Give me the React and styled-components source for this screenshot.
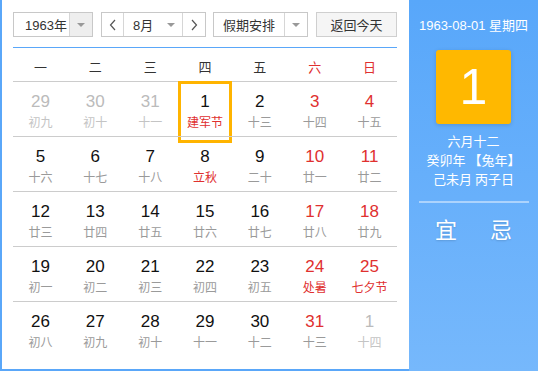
import React from "react";
import styled, { createGlobalStyle, css } from "styled-components";

const Global = createGlobalStyle`
  html, body { margin: 0; padding: 0; background: #fff; }
  body { font-family: "Liberation Sans", "Noto Sans CJK SC", Arial, sans-serif; }
  * { box-sizing: border-box; }
`;

const Frame = styled.div`
  width: 538px;
  height: 371px;
  display: flex;
  background: #5aa7f9;
  overflow: hidden;
`;

const Left = styled.div`
  width: 407px;
  height: 369px;
  margin-left: 2px;
  background: #fff;
  padding: 12px 12px 0 11px;
  display: flex;
  flex-direction: column;
`;

const Toolbar = styled.div`
  display: flex;
  align-items: center;
  height: 25px;
`;

const Box = styled.div`
  display: flex;
  height: 25px;
  border: 1px solid #c8c8c8;
  background: #fff;
  margin-right: ${(p) => p.$mr || 0}px;
`;

const Label = styled.div`
  width: ${(p) => p.$w}px;
  display: flex;
  align-items: center;
  justify-content: ${(p) => (p.$center ? "center" : "flex-start")};
  padding-left: ${(p) => p.$pl || 0}px;
  font-size: 13px;
  color: #333;
  font-family: ${(p) => (p.$cjk ? '"Noto Sans CJK SC", sans-serif' : '"Liberation Sans", "Noto Sans CJK SC", sans-serif')};
`;

const Arrow = styled.div`
  width: ${(p) => p.$w || 23}px;
  display: flex;
  align-items: center;
  justify-content: center;
  background: ${(p) => (p.$bg ? "#eeeeee" : "#fff")};
  border-left: ${(p) => (p.$sep ? "1px solid #d6d6d6" : "none")};
  border-right: ${(p) => (p.$sepR ? "1px solid #d6d6d6" : "none")};
`;

const Tri = styled.span`
  width: 0;
  height: 0;
  border-left: 4px solid transparent;
  border-right: 4px solid transparent;
  border-top: 4px solid #999;
`;

const Button = styled.div`
  margin-left: auto;
  width: 81px;
  height: 25px;
  border: 1px solid #cfcfcf;
  background: #f5f5f5;
  display: flex;
  align-items: center;
  justify-content: center;
  font-size: 13px;
  color: #333;
  font-family: "Noto Sans CJK SC", sans-serif;
`;

const Grid = styled.div`
  margin-top: 10px;
  border-top: 1px solid #5aa7f9;
  display: grid;
  grid-template-columns: repeat(7, 1fr);
`;

const Head = styled.div`
  height: 33px;
  display: flex;
  align-items: center;
  justify-content: center;
  padding-top: 3px;
  font-size: 13px;
  font-family: "Noto Sans CJK SC", sans-serif;
  color: ${(p) => (p.$red ? "#e0302f" : "#333")};
`;

const Cell = styled.div`
  position: relative;
  height: 55px;
  border-top: 1px solid #cccccc;
  display: flex;
  flex-direction: column;
  align-items: center;
  padding-top: 10px;
  ${(p) =>
    p.$today &&
    css`
      &::after {
        content: "";
        position: absolute;
        top: -1px;
        left: 0;
        right: 0;
        height: 56px;
        border: 3px solid #ffb400;
      }
    `}
`;

const Num = styled.div`
  font-size: 17px;
  line-height: 20px;
  font-family: "Liberation Sans", Arial, sans-serif;
  color: ${(p) => (p.$dim ? "#bbbbbb" : p.$red ? "#e0302f" : "#111")};
`;

const Lunar = styled.div`
  margin-top: 2px;
  font-size: 12px;
  line-height: 16px;
  font-family: "Noto Sans CJK SC", sans-serif;
  color: ${(p) => (p.$fest ? "#e0302f" : p.$dim ? "#c4c4c4" : "#9a9a9a")};
`;

const Right = styled.div`
  flex: 1;
  background: linear-gradient(#58a7fa, #76b8fc);
  display: flex;
  flex-direction: column;
  align-items: center;
  color: #fff;
  font-family: "Liberation Sans", "Noto Sans CJK SC", sans-serif;
  padding-top: 17px;
`;

const DateLine = styled.div`
  font-size: 13px;
  line-height: 18px;
`;

const BigDay = styled.div`
  margin-top: 15px;
  width: 75px;
  height: 74px;
  border-radius: 3px;
  background: #ffb800;
  box-shadow: 0 1px 4px rgba(0, 0, 0, 0.15);
  display: flex;
  align-items: center;
  justify-content: center;
  font-size: 50px;
  font-family: "Liberation Sans", Arial, sans-serif;
`;

const InfoLines = styled.div`
  margin-top: 7px;
  text-align: center;
  font-size: 13px;
  line-height: 19px;
  font-family: "Noto Sans CJK SC", sans-serif;
`;

const Divider = styled.div`
  width: 110px;
  height: 2px;
  margin-top: 13px;
  background: rgba(255, 255, 255, 0.45);
`;

const YiJi = styled.div`
  margin-top: 9px;
  display: flex;
  gap: 33px;
  font-size: 22px;
  font-family: "Noto Sans CJK SC", sans-serif;
  text-shadow: 0 1px 2px rgba(0, 0, 0, 0.15);
`;

const Chev = ({ dir }) => (
  <svg width="8" height="12" viewBox="0 0 8 12">
    <polyline
      points={dir === "l" ? "6,1 1.5,6 6,11" : "2,1 6.5,6 2,11"}
      fill="none"
      stroke="#555"
      strokeWidth="1.2"
    />
  </svg>
);

const heads = ["一", "二", "三", "四", "五", "六", "日"];

const days = [
  ["29", "初九", 1], ["30", "初十", 1], ["31", "十一", 1], ["1", "建军节", 0, 1, 1], ["2", "十三"], ["3", "十四"], ["4", "十五"],
  ["5", "十六"], ["6", "十七"], ["7", "十八"], ["8", "立秋", 0, 1], ["9", "二十"], ["10", "廿一"], ["11", "廿二"],
  ["12", "廿三"], ["13", "廿四"], ["14", "廿五"], ["15", "廿六"], ["16", "廿七"], ["17", "廿八"], ["18", "廿九"],
  ["19", "初一"], ["20", "初二"], ["21", "初三"], ["22", "初四"], ["23", "初五"], ["24", "处暑", 0, 1], ["25", "七夕节", 0, 1],
  ["26", "初八"], ["27", "初九"], ["28", "初十"], ["29", "十一"], ["30", "十二"], ["31", "十三"], ["1", "十四", 1],
];

export default function App() {
  return (
    <>
      <Global />
      <Frame>
        <Left>
          <Toolbar>
            <Box $mr={8}>
              <Label $w={55} $pl={11}>1963年</Label>
              <Arrow $bg $sep><Tri /></Arrow>
            </Box>
            <Box $mr={7}>
              <Arrow $sepR $w={22}><Chev dir="l" /></Arrow>
              <Label $w={36} $pl={9}>8月</Label>
              <Arrow $w={22}><Tri /></Arrow>
              <Arrow $sep $w={23}><Chev dir="r" /></Arrow>
            </Box>
            <Box>
              <Label $w={70} $center $cjk>假期安排</Label>
              <Arrow $sep $w={23}><Tri /></Arrow>
            </Box>
            <Button>返回今天</Button>
          </Toolbar>
          <Grid>
            {heads.map((h, i) => (
              <Head key={h} $red={i >= 5}>{h}</Head>
            ))}
            {days.map(([n, l, dim, fest, today], i) => {
              const red = i % 7 >= 5;
              return (
                <Cell key={i} $today={today}>
                  <Num $dim={dim} $red={red}>{n}</Num>
                  <Lunar $dim={dim} $fest={fest}>{l}</Lunar>
                </Cell>
              );
            })}
          </Grid>
        </Left>
        <Right>
          <DateLine>1963-08-01 星期四</DateLine>
          <BigDay>1</BigDay>
          <InfoLines>
            <div>六月十二</div>
            <div>癸卯年 【兔年】</div>
            <div>己未月 丙子日</div>
          </InfoLines>
          <Divider />
          <YiJi>
            <span>宜</span>
            <span>忌</span>
          </YiJi>
        </Right>
      </Frame>
    </>
  );
}
